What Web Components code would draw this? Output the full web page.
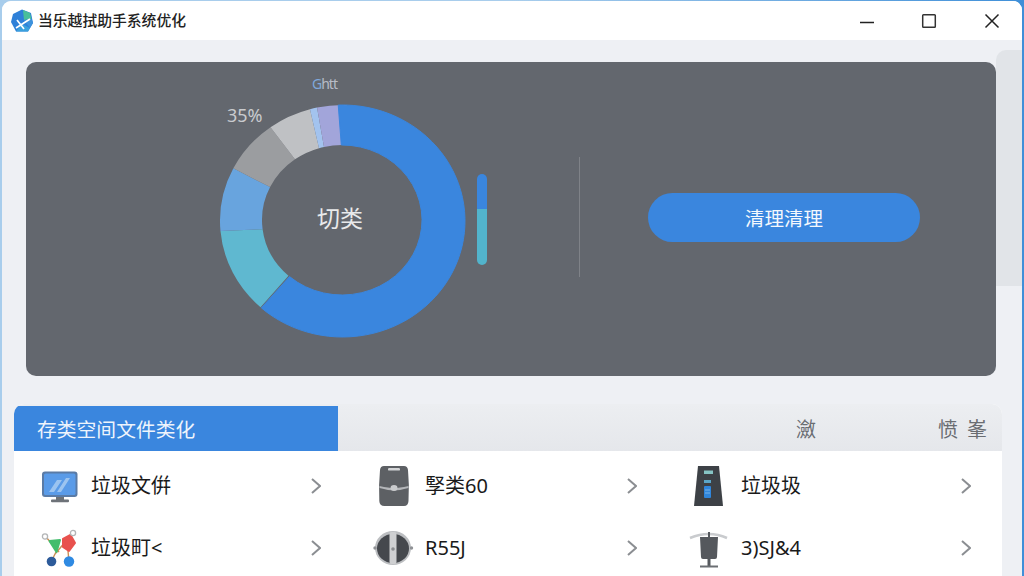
<!DOCTYPE html>
<html lang="zh">
<head>
<meta charset="utf-8">
<title>当乐越拭助手系统优化</title>
<style>
html, body { margin: 0; padding: 0; background: linear-gradient(90deg, #a8cdec 0, #a8cdec 50%, #3f8fd8 100%); }
body { font-family: "Noto Sans", "Noto Sans CJK SC", sans-serif; overflow: hidden; }
</style>
</head>
<body>
<app-window>
  <title-bar label="当乐越拭助手系统优化"></title-bar>
  <usage-panel>
    <usage-donut center="切类"></usage-donut>
    <span slot="action">清理清理</span>
  </usage-panel>
  <category-card heading="存类空间文件类化">
    <span slot="extra" class="one">瀲</span>
    <span slot="extra" class="two">愤</span>
    <span slot="extra" class="three">峯</span>
    <category-row label="垃圾文倂">
      <svg slot="icon" width="38" height="42" viewBox="0 0 38 42">
        <rect x="1" y="6.500" width="35.500" height="25.500" rx="3" fill="#5a7ba6"/>
        <rect x="3" y="8.500" width="31.500" height="21.500" rx="1.500" fill="#5a9be8"/>
        <path d="M8 27 16 15h5L13 27zM16 27l9-14h4l-9 14z" fill="#9cc4f0"/>
        <path d="M15 32h8v3h-8z" fill="#6d7278"/>
        <rect x="10" y="34.500" width="18" height="2.800" rx="1" fill="#6d7278"/>
      </svg>
    </category-row>
    <category-row label="孯类60">
      <svg slot="icon" width="38" height="42" viewBox="0 0 38 42">
        <path d="M9 1h20q3.500 0 4 4Q34.500 20 33.500 36q-.3 5-4.500 5H9.500q-5 0-5.200-5Q3.500 20 5 5q.4-4 4-4z" fill="#5d6064"/>
        <rect x="13" y="3" width="12" height="2.600" rx="1.200" fill="#d4d5d7"/>
        <path d="M4.500 21Q14 23 19 23T33.500 21V23Q24 25.500 19 25.500T4.500 23z" fill="#b4b6b9"/>
        <ellipse cx="19" cy="23" rx="3.500" ry="3" fill="#c9cbcd"/>
      </svg>
    </category-row>
    <category-row label="垃圾圾">
      <svg slot="icon" width="38" height="42" viewBox="0 0 38 42">
        <path d="M7 1h21l4 40H3z" fill="#3d4146"/>
        <rect x="13" y="5.500" width="9" height="3.500" fill="#86c4c4"/>
        <rect x="13" y="15" width="7" height="3" fill="#5ba6c8"/>
        <rect x="13" y="21" width="7" height="12" rx="1" fill="#2f86dc"/>
        <path d="M14 25h5M14 28h5" stroke="#8cc0ee" stroke-width=".8"/>
      </svg>
    </category-row>
    <category-row label="垃圾町<">
      <svg slot="icon" width="38" height="42" viewBox="0 0 38 42">
        <path d="M15 25 10 35M27 24l1 11M5 10l13 15M31 7 14 27" stroke="#c98f56" stroke-width="1.400" fill="none"/>
        <path d="M8.500 14 19 13 15.500 25z" fill="#43bd6c" stroke="#43bd6c" stroke-width="2" stroke-linejoin="round"/>
        <path d="M22 12 29.500 8l4.500 8-6 8-6-4z" fill="#e8524e" stroke="#e8524e" stroke-width="2" stroke-linejoin="round"/>
        <circle cx="4" cy="9.500" r="2.600" fill="#fff" stroke="#b3b5b7" stroke-width="1.300"/>
        <circle cx="32" cy="6" r="2.600" fill="#fff" stroke="#b3b5b7" stroke-width="1.300"/>
        <circle cx="10.500" cy="34.500" r="4.800" fill="#2d5b9a"/>
        <circle cx="28" cy="34.500" r="5.200" fill="#2f8ae2"/>
      </svg>
    </category-row>
    <category-row label="R55J">
      <svg slot="icon" width="38" height="42" viewBox="0 0 38 42">
        <ellipse cx="18" cy="21" rx="18" ry="17" fill="#bcbec1"/>
        <circle cx="0" cy="21" r="1.700" fill="#8f9195"/>
        <circle cx="36.500" cy="21" r="1.700" fill="#8f9195"/>
        <ellipse cx="18" cy="21.500" rx="16" ry="14.500" fill="#45484d"/>
        <rect x="14.500" y="5" width="7" height="32" rx="2" fill="#cfd0d2"/>
        <circle cx="18" cy="22" r="1.800" fill="#8a8c90"/>
      </svg>
    </category-row>
    <category-row label="3)SJ&amp;4">
      <svg slot="icon" width="38" height="42" viewBox="0 0 38 42">
        <path d="M-1 11Q18 3 36 11" stroke="#c9cbce" stroke-width="2.500" fill="none"/>
        <path d="M18 5v6" stroke="#55585d" stroke-width="2"/>
        <path d="M9 10h18l-1 20q0 2-2 2H12q-2 0-2-2z" fill="#55585d"/>
        <path d="M18 32v7" stroke="#55585d" stroke-width="3"/>
        <path d="M9 39.500h18" stroke="#6b6e73" stroke-width="2"/>
      </svg>
    </category-row>
  </category-card>
</app-window>

<script>
/**
 * Web components for the system optimizer window.
 */

// Shared font stack for every shadow root.
const FONT = '"Noto Sans", "Noto Sans CJK SC", sans-serif'

/**
 * Creates a template from a html string.
 *
 * @param {string} html - The markup.
 * @returns {HTMLTemplateElement} The template.
 */
function makeTemplate(html) {
  const template = document.createElement('template')
  template.innerHTML = html
  return template
}

const windowTemplate = makeTemplate(`
<style>
:host { display: block; width: 1024px; height: 576px; box-sizing: border-box; padding: 1px 2px 0 2px; overflow: hidden; font-family: ${FONT}; }
#frame { position: relative; height: 100%; border-radius: 9px 9px 0 0; background: #eef0f4; overflow: hidden; display: flex; flex-direction: column; }
#thumb { position: absolute; left: 994px; top: 49px; width: 26px; height: 236px; border-radius: 10px 0 0 0; background: #e1e4e8; }
::slotted(usage-panel), ::slotted(category-card) { position: relative; }
</style>
<div id="frame">
  <div id="thumb"></div>
  <slot></slot>
</div>
`)

customElements.define('app-window',
  /**
   * The outer window with its overlay scrollbar.
   */
  class extends HTMLElement {
    /**
     * Creates an instance of the current type.
     */
    constructor() {
      super()
      this.attachShadow({ mode: 'open' })
        .appendChild(windowTemplate.content.cloneNode(true))
    }
  }
)

const titleTemplate = makeTemplate(`
<style>
:host { display: flex; align-items: center; flex: none; height: 39px; background: #fff; color: #222; }
#logo { margin-left: 8px; flex: none; }
#label { margin-left: 4px; font-size: 14.800px; font-weight: 500; line-height: 1; flex: 1; }
#controls { display: flex; align-items: center; flex: none; }
svg { display: block; }
</style>
<svg id="logo" width="24" height="24" viewBox="0 0 24 24">
  <path d="M12 .5 21 4 23 14 18 22.500H6L1 13 3 5z" fill="#2f80d8"/>
  <path d="M13 1 20 4 21.500 10 14 11z" fill="#49bf9a"/>
  <path d="M14 11 21.500 10 23 14 20 19z" fill="#3d92dc"/>
  <path d="M6 22.500H18L20 19 12 15z" fill="#3aa0dd"/>
  <path d="M6 19 20 10M7 11l7 9" stroke="#fff" stroke-width="1.700" fill="none"/>
</svg>
<span id="label"></span>
<div id="controls">
  <svg width="16" height="16" viewBox="0 0 16 16" style="margin-right:46px"><path d="M1 9.500h14" stroke="#222" stroke-width="1.400"/></svg>
  <svg width="16" height="16" viewBox="0 0 16 16" style="margin-right:47px"><rect x="1.700" y="1.700" width="12.600" height="12.600" rx=".8" fill="none" stroke="#333" stroke-width="1.500"/></svg>
  <svg width="16" height="16" viewBox="0 0 16 16" style="margin-right:22px"><path d="M1.500 1.500 14.500 14.500M14.500 1.500 1.500 14.500" stroke="#222" stroke-width="1.500"/></svg>
</div>
`)

customElements.define('title-bar',
  /**
   * The title bar with logo and window controls.
   */
  class extends HTMLElement {
    /**
     * Creates an instance of the current type.
     */
    constructor() {
      super()
      this.attachShadow({ mode: 'open' })
        .appendChild(titleTemplate.content.cloneNode(true))
    }

    /**
     * Called after the element is inserted into the DOM.
     */
    connectedCallback() {
      this.shadowRoot.getElementById('label').textContent = this.getAttribute('label')
    }
  }
)

const panelTemplate = makeTemplate(`
<style>
:host { display: flex; align-items: flex-start; box-sizing: border-box; flex: none; width: 970px; height: 314px; margin: 22px 0 0 24px; padding: 8px 0 0 174px; border-radius: 10px; background: #63676e; }
#side { display: flex; align-items: center; height: 120px; margin-top: 87px; }
#divider { width: 1px; height: 120px; margin-left: 79px; background: #7f8288; }
#action { display: flex; align-items: center; justify-content: center; width: 272px; height: 49px; margin-left: 68px; border-radius: 25px; background: #3a86de; color: #f4f8fd; font-size: 19.500px; }
</style>
<slot></slot>
<div id="side">
  <div id="divider"></div>
  <div id="action"><slot name="action"></slot></div>
</div>
`)

customElements.define('usage-panel',
  /**
   * The dark panel with the chart and the clean button.
   */
  class extends HTMLElement {
    /**
     * Creates an instance of the current type.
     */
    constructor() {
      super()
      this.attachShadow({ mode: 'open' })
        .appendChild(panelTemplate.content.cloneNode(true))
    }
  }
)

const donutTemplate = makeTemplate(`
<style>
:host { display: block; position: relative; flex: none; width: 300px; height: 280px; }
svg { display: block; }
span { position: absolute; line-height: 1; white-space: nowrap; }
#center { left: 117px; top: 137px; font-size: 23px; color: #e9eaeb; }
#percent { left: 27px; top: 36px; font-size: 18px; color: #c9cbce; }
#top { left: 112px; top: 7px; font-size: 14px; letter-spacing: -1px; color: #b7bcc6; }
#top b { font-weight: 400; color: #7fa8dc; }
</style>
<svg width="300" height="280" viewBox="200 70 300 280"></svg>
<span id="percent">35%</span>
<span id="top"><b>G</b>htt</span>
<span id="center"></span>
`)

customElements.define('usage-donut',
  /**
   * The storage donut, slightly wider than tall like the original.
   */
  class extends HTMLElement {
    /**
     * Segments as outer start, inner start, outer end, inner end in degrees.
     *
     * @type {Array}
     */
    #segments = [
      { from: [222, 222], to: [265, 263], color: '#5fb8d0' },
      { from: [265, 263], to: [297, 296], color: '#68a4de' },
      { from: [297, 296], to: [324, 324], color: '#9b9da0' },
      { from: [324, 324], to: [344.600, 343.300], color: '#bfc1c4' },
      { from: [344.600, 343.300], to: [348, 347], color: '#a3c3ee' },
      { from: [348, 347], to: [362, 362], color: '#a2a5da' },
      { from: [358, 359.500], to: [581.500, 581], color: '#3a86de', round: true }
    ]

    /**
     * Creates an instance of the current type.
     */
    constructor() {
      super()
      this.attachShadow({ mode: 'open' })
        .appendChild(donutTemplate.content.cloneNode(true))
    }

    /**
     * Called after the element is inserted into the DOM.
     */
    connectedCallback() {
      this.shadowRoot.getElementById('center').textContent = this.getAttribute('center')
      this.shadowRoot.querySelector('svg').innerHTML = this.#segments.map((s) => this.#segmentPath(s)).join('')
    }

    /**
     * Builds the path for one ring segment.
     *
     * @param {object} segment - The segment settings.
     * @returns {string} The path markup.
     */
    #segmentPath(segment) {
      const outer = { cx: 342.500, cy: 221, rx: 122.500, ry: 116 }
      const inner = { cx: 342, cy: 220, rx: 80, ry: 75 }
      const point = (e, deg) => {
        const a = deg * Math.PI / 180
        return `${(e.cx + e.rx * Math.sin(a)).toFixed(2)} ${(e.cy - e.ry * Math.cos(a)).toFixed(2)}`
      }
      const large = segment.to[0] - segment.from[0] > 180 ? 1 : 0
      const d = `M${point(outer, segment.from[0])}A${outer.rx} ${outer.ry} 0 ${large} 1 ${point(outer, segment.to[0])}` +
        `L${point(inner, segment.to[1])}A${inner.rx} ${inner.ry} 0 ${large} 0 ${point(inner, segment.from[1])}Z`
      const stroke = segment.round ? ` stroke="${segment.color}" stroke-width="1" stroke-linejoin="round"` : ''
      return `<path d="${d}" fill="${segment.color}"${stroke}/>`
    }
  }
)

customElements.define('usage-meter',
  /**
   * The small two colour meter beside the donut.
   */
  class extends HTMLElement {
    /**
     * Creates an instance of the current type.
     */
    constructor() {
      super()
      this.attachShadow({ mode: 'open' }).innerHTML = `
<style>
:host { position: absolute; left: 277px; top: 104px; display: flex; flex-direction: column; width: 10px; height: 91px; border-radius: 5px; overflow: hidden; }
div { background: #3a86de; height: 35px; }
div + div { background: #52b4cc; flex: 1; height: auto; }
</style>
<div></div><div></div>`
    }
  }
)

const cardTemplate = makeTemplate(`
<style>
:host { display: block; flex: 1; min-height: 0; width: 988px; margin: 28px 0 0 12px; border-radius: 10px 10px 0 0; overflow: hidden; background: #fff; }
#head { position: relative; display: flex; height: 47px; background: linear-gradient(#eceef1, #e5e7eb); }
#tab { display: flex; align-items: center; box-sizing: border-box; width: 324px; height: 45px; margin-top: 2px; padding-left: 23px; background: #3a86de; color: #eef4fc; font-size: 19.800px; }
#extra { flex: 1; color: #6a6d72; font-size: 20px; line-height: 1; }
::slotted(.one), ::slotted(.two), ::slotted(.three) { position: absolute; top: 16px; }
::slotted(.one) { left: 782px; }
::slotted(.two) { left: 924px; }
::slotted(.three) { left: 953px; }
#rows { display: grid; grid-template-columns: 334px 316px 334px; grid-auto-rows: 62px; padding: 4px 2px 0; }
</style>
<div id="head">
  <div id="tab"></div>
  <div id="extra"><slot name="extra"></slot></div>
</div>
<div id="rows"><slot></slot></div>
`)

customElements.define('category-card',
  /**
   * The card with the blue heading tab and the grid of categories.
   */
  class extends HTMLElement {
    /**
     * Creates an instance of the current type.
     */
    constructor() {
      super()
      this.attachShadow({ mode: 'open' })
        .appendChild(cardTemplate.content.cloneNode(true))
    }

    /**
     * Called after the element is inserted into the DOM.
     */
    connectedCallback() {
      this.shadowRoot.getElementById('tab').textContent = this.getAttribute('heading')
    }
  }
)

const rowTemplate = makeTemplate(`
<style>
:host { display: flex; align-items: center; box-sizing: border-box; padding: 0 29px 0 25px; color: #1a1a1a; }
#icon { display: flex; flex: none; width: 38px; height: 42px; margin-right: 12px; }
#label { flex: 1; font-size: 20px; line-height: 1; white-space: nowrap; }
#chevron { flex: none; display: block; }
::slotted(svg) { display: block; overflow: visible; }
</style>
<div id="icon"><slot name="icon"></slot></div>
<span id="label"></span>
<svg id="chevron" width="10" height="16" viewBox="0 0 10 16"><path d="M1 1l8 7-8 7" fill="none" stroke="#8b8e92" stroke-width="2"/></svg>
`)

customElements.define('category-row',
  /**
   * One category: an icon, a label and a chevron.
   */
  class extends HTMLElement {
    /**
     * Creates an instance of the current type.
     */
    constructor() {
      super()
      this.attachShadow({ mode: 'open' })
        .appendChild(rowTemplate.content.cloneNode(true))
    }

    /**
     * Called after the element is inserted into the DOM.
     */
    connectedCallback() {
      this.shadowRoot.getElementById('label').textContent = this.getAttribute('label')
    }
  }
)

// The meter sits over the panel, next to the donut.
document.querySelector('usage-donut').shadowRoot.appendChild(document.createElement('usage-meter'))
</script>
</body>
</html>
